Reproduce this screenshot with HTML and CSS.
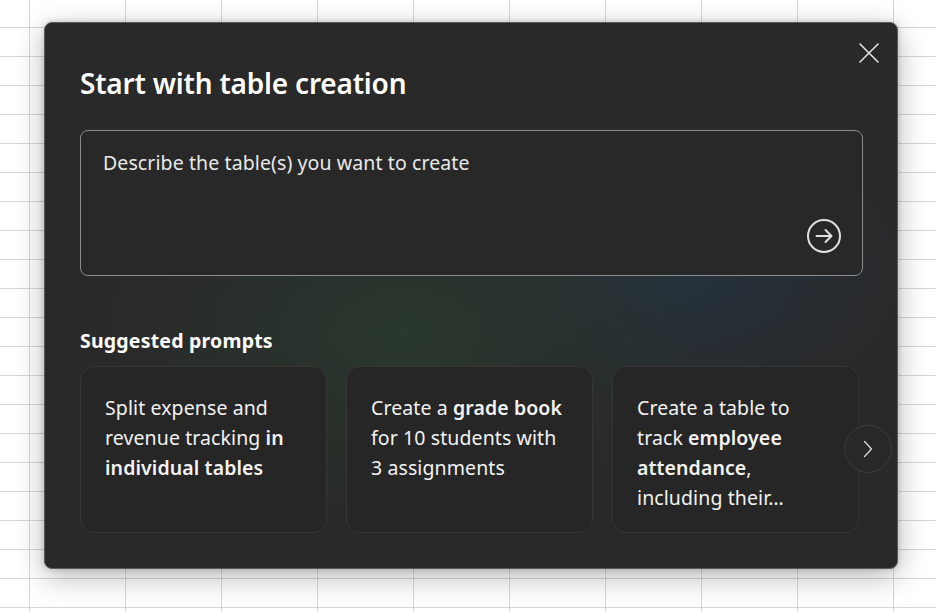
FILE: index.html
```html
<!DOCTYPE html>
<html lang="en">
<head>
<meta charset="utf-8">
<title>Start with table creation</title>
<link rel="stylesheet" href="styles.css">
</head>
<body>
<div class="sheet">
  <section class="dialog">
    <button class="close" aria-label="Close">
      <svg width="20" height="20" viewBox="0 0 20 20"><path d="M1 1 L19 19 M19 1 L1 19" stroke="#e6e6e6" stroke-width="1.5" fill="none" stroke-linecap="round"/></svg>
    </button>
    <h1 class="title">Start with table creation</h1>
    <div class="input">
      <p class="placeholder">Describe the table(s) you want to create</p>
      <button class="send" aria-label="Send">
        <svg width="36" height="36" viewBox="0 0 36 36"><circle cx="18" cy="18" r="16" stroke="#e0e0e0" stroke-width="2" fill="none"/><path d="M10.5 18 H25 M19.5 12 L25.5 18 L19.5 24" stroke="#e0e0e0" stroke-width="2" fill="none" stroke-linecap="round" stroke-linejoin="round"/></svg>
      </button>
    </div>
    <h2 class="subtitle">Suggested prompts</h2>
    <div class="prompts">
      <div class="card">Split expense and<br>revenue tracking <b>in</b><br><b>individual tables</b></div>
      <div class="card">Create a <b>grade book</b><br>for 10 students with<br>3 assignments</div>
      <div class="card">Create a table to<br>track <b>employee</b><br><b>attendance</b>,<br>including their…</div>
      <button class="next" aria-label="Next">
        <svg width="14" height="20" viewBox="0 0 14 20"><path d="M3.5 2.5 L10.5 10 L3.5 17.5" stroke="#d8d8d8" stroke-width="1.3" fill="none" stroke-linecap="round" stroke-linejoin="round"/></svg>
      </button>
    </div>
  </section>
</div>
</body>
</html>
```
FILE: styles.css
```css
* { box-sizing: border-box; }
html, body { margin: 0; padding: 0; }
body {
  width: 936px;
  height: 612px;
  overflow: hidden;
  font-family: "Noto Sans", "Open Sans", sans-serif;
  background-color: #ffffff;
  background-image:
    linear-gradient(to right, #d6d6d6 1px, transparent 1px),
    linear-gradient(to bottom, #d6d6d6 1px, transparent 1px);
  background-size: 96px 29px;
  background-position: 29px 27px;
}
.sheet { position: relative; width: 936px; height: 612px; }
.dialog {
  position: absolute;
  left: 44px;
  top: 22px;
  width: 854px;
  height: 547px;
  border: 1px solid #5a5a5a;
  border-radius: 8px;
  background:
    radial-gradient(ellipse 380px 230px at 360px 310px, rgba(42,62,48,0.7), transparent 80%),
    radial-gradient(ellipse 280px 180px at 640px 250px, rgba(36,54,70,0.7), transparent 80%),
    #292929;
  box-shadow: 0 8px 30px rgba(0,0,0,0.28), 0 0 6px rgba(0,0,0,0.18);
  padding: 37px 35px 0 35px;
  color: #ffffff;
}
.close {
  position: absolute;
  right: 18px;
  top: 20px;
  width: 20px;
  height: 20px;
  padding: 0;
  border: 0;
  background: none;
  display: flex;
}
.title {
  margin: 0;
  font-size: 28px;
  font-weight: 600;
  line-height: 46px;
  letter-spacing: -0.2px;
}
.input {
  margin-top: 24px;
  height: 146px;
  width: 783px;
  border: 1px solid #8c8c8c;
  border-radius: 8px;
  background: #282828;
  padding: 17px 22px 16px 22px;
  display: flex;
  flex-direction: column;
  justify-content: space-between;
}
.placeholder {
  margin: 0;
  font-size: 19.5px;
  line-height: 30px;
  color: #e8e8e8;
  letter-spacing: 0.1px;
}
.send {
  align-self: flex-end;
  margin-right: -2px;
  margin-bottom: 5px;
  width: 36px;
  height: 36px;
  padding: 0;
  border: 0;
  background: none;
  display: flex;
}
.subtitle {
  margin: 52px 0 0 0;
  font-size: 19.5px;
  font-weight: 700;
  line-height: 26px;
  letter-spacing: 0.2px;
}
.prompts {
  position: relative;
  margin-top: 12px;
  display: flex;
  gap: 19px;
}
.card {
  width: 247px;
  height: 167px;
  border: 1px solid #363636;
  border-radius: 14px;
  background: #262626;
  padding: 26px 10px 25px 24px;
  font-size: 19.5px;
  line-height: 30px;
  color: #f2f2f2;
  letter-spacing: 0.1px;
  white-space: nowrap;
}
.card b { font-weight: 600; }
.next {
  position: absolute;
  left: 764px;
  top: 59px;
  width: 48px;
  height: 48px;
  border-radius: 50%;
  border: 1px solid #3c3c3c;
  background: #282828;
  display: flex;
  align-items: center;
  justify-content: center;
  padding: 0;
}
```
